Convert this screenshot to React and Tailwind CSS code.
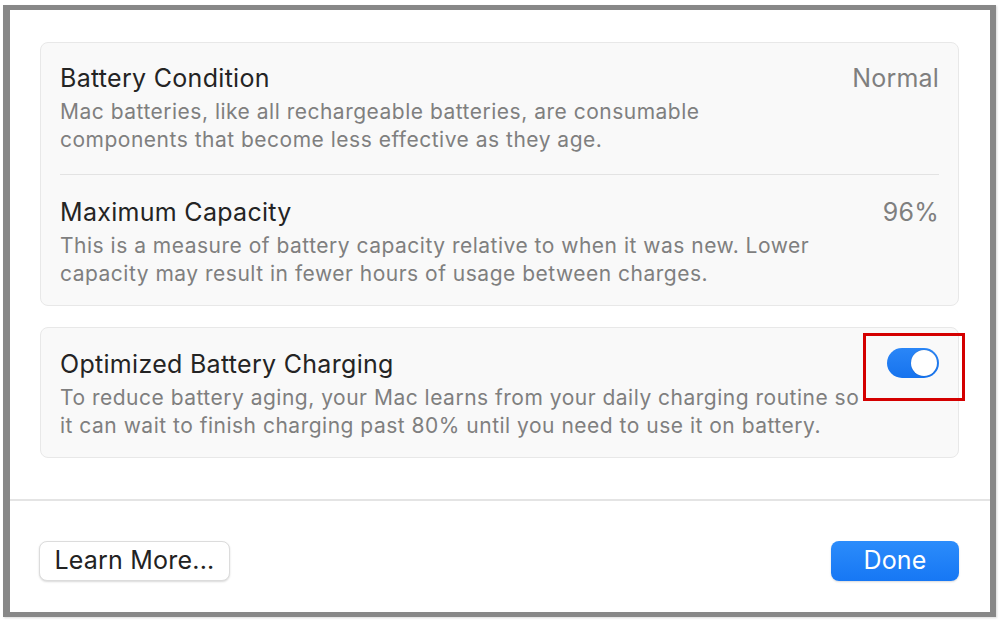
export default function App() {
  const font = { fontFamily: 'Inter, "Noto Sans", "Liberation Sans", sans-serif' };
  const title = "text-[25px] leading-[30px] text-[#242424] tracking-[0.3px] whitespace-nowrap";
  const desc = "mt-[5px] text-[21px] leading-[28px] text-[#7f7f7f] tracking-[0.5px] whitespace-nowrap";
  const value = "text-[25px] leading-[30px] text-[#7f7f7f] tracking-[0.2px]";
  return (
    <div className="w-[1001px] h-[622px] bg-white pt-[5px] pl-[3px] pr-[5px] pb-[5px]" style={font}>
      <div className="h-full flex flex-col bg-white border-[#888888] border-l-[7px] border-r-[6px] border-y-[5px] shadow-[1px_1px_2px_rgba(0,0,0,0.15)]">
        <div className="pt-[32px] pl-[30px] pr-[31px] flex flex-col gap-[21px]">
          <div className="rounded-[8px] bg-[#f9f9f9] border border-[#e8e8e8] px-[19px]">
            <div className="pt-[20px] pb-[20px] flex justify-between">
              <div>
                <div className={title}>Battery Condition</div>
                <div className={desc}>
                  Mac batteries, like all rechargeable batteries, are consumable<br />components that become less effective as they age.
                </div>
              </div>
              <div className={value}>Normal</div>
            </div>
            <div className="h-px bg-[#e3e3e3]" />
            <div className="pt-[22px] pb-[17px] flex justify-between">
              <div>
                <div className={title}>Maximum Capacity</div>
                <div className={desc}>
                  This is a measure of battery capacity relative to when it was new. Lower<br />capacity may result in fewer hours of usage between charges.
                </div>
              </div>
              <div className={value}>96%</div>
            </div>
          </div>
          <div className="rounded-[8px] bg-[#f9f9f9] border border-[#e8e8e8] px-[19px] pt-[21px] pb-[17px] flex justify-between">
            <div>
              <div className={title}>Optimized Battery Charging</div>
              <div className={desc}>
                To reduce battery aging, your Mac learns from your daily charging routine so<br />it can wait to finish charging past 80% until you need to use it on battery.
              </div>
            </div>
            <div className="relative shrink-0">
              <div className="w-[52px] h-[30px] rounded-full bg-gradient-to-b from-[#2a86f7] to-[#1673ee] flex items-center justify-end pr-[2px] mt-[-1px]">
                <div className="w-[26px] h-[26px] rounded-full bg-white shadow-[0_0_1px_rgba(0,0,0,0.3)]" />
              </div>
              <div className="absolute left-[-24px] top-[-16px] w-[102px] h-[68px] border-[3px] border-[#d40000]" />
            </div>
          </div>
        </div>
        <div className="mt-[41px] h-[2px] bg-[#e4e4e4]" />
        <div className="flex justify-between pl-[29px] pr-[31px] pt-[40px]">
          <button className="h-[40px] w-[191px] rounded-[8px] bg-white border border-[#dcdcdc] shadow-[0_1px_2px_rgba(0,0,0,0.15)] text-[25px] tracking-[0.2px] text-[#222222] flex items-center justify-center pb-[1px]">
            Learn More...
          </button>
          <button className="h-[40px] w-[128px] rounded-[8px] bg-gradient-to-b from-[#2b8cfb] to-[#1677f4] text-[25px] tracking-[0.2px] text-white flex items-center justify-center pb-[1px] shadow-[0_1px_2px_rgba(0,0,0,0.15)]">
            Done
          </button>
        </div>
      </div>
    </div>
  );
}
